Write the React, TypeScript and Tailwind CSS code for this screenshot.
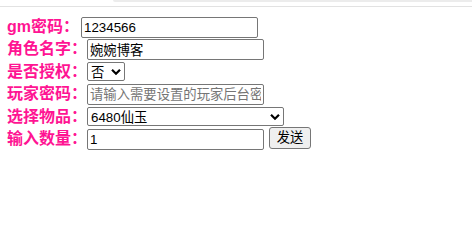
import React from 'react';

const Chevron = () => (
    <svg className="pointer-events-none absolute right-[4px] top-1/2 -translate-y-1/2" width="10" height="7" viewBox="0 0 10 7">
        <path d="M1 1.2 L5 5.2 L9 1.2" fill="none" stroke="#000" strokeWidth="2.2" />
    </svg>
);

const labelCls = "font-bold text-[16px] text-[#ff1493] whitespace-nowrap leading-[22px]";
const inputCls = "h-[21px] border border-[#767676] rounded-[2px] px-[2px] text-[13.33px] text-black bg-white outline-none placeholder:text-[#757575]";

export default function App() {
    return (
        <div className="w-[472px] h-[236px] bg-white font-['Liberation_Sans','Noto_Sans_CJK_SC',sans-serif] overflow-hidden">
            {/* top strip */}
            <div className="h-[7px] border-b border-[#e2e2e2] flex">
                <div className="w-[113px]" />
                <div className="flex-1 h-[2px] bg-[#ececec] rounded-bl-[6px]" />
            </div>

            <div className="pl-[7px] pt-[9px] flex flex-col">
                <div className="flex items-center h-[22px]">
                    <span className={labelCls}>gm密码：</span>
                    <input className={`${inputCls} w-[177px] ml-[2px]`} defaultValue="1234566" />
                </div>
                <div className="flex items-center h-[22px]">
                    <span className={labelCls}>角色名字：</span>
                    <input className={`${inputCls} w-[177px]`} defaultValue="婉婉博客" />
                </div>
                <div className="flex items-center h-[23px]">
                    <span className={labelCls}>是否授权：</span>
                    <div className="relative">
                        <select className="appearance-none h-[19px] w-[38px] border border-[#767676] rounded-[2px] pl-[3px] text-[13.33px] bg-white outline-none">
                            <option>否</option>
                            <option>是</option>
                        </select>
                        <Chevron />
                    </div>
                </div>
                <div className="flex items-center h-[22px]">
                    <span className={labelCls}>玩家密码：</span>
                    <input className={`${inputCls} w-[177px]`} placeholder="请输入需要设置的玩家后台密码" />
                </div>
                <div className="flex items-center h-[23px]">
                    <span className={labelCls}>选择物品：</span>
                    <div className="relative">
                        <select className="appearance-none h-[19px] w-[197px] border border-[#767676] rounded-[2px] pl-[3px] text-[13.33px] bg-white outline-none">
                            <option>6480仙玉</option>
                        </select>
                        <Chevron />
                    </div>
                </div>
                <div className="flex items-center h-[22px]">
                    <span className={labelCls}>输入数量：</span>
                    <input className={`${inputCls} w-[177px]`} defaultValue="1" />
                    <button className="ml-[5px] h-[22px] w-[42px] -mt-[2px] border border-[#767676] rounded-[3px] bg-[#efefef] text-[13.33px] text-black">发送</button>
                </div>
            </div>
        </div>
    );
}
